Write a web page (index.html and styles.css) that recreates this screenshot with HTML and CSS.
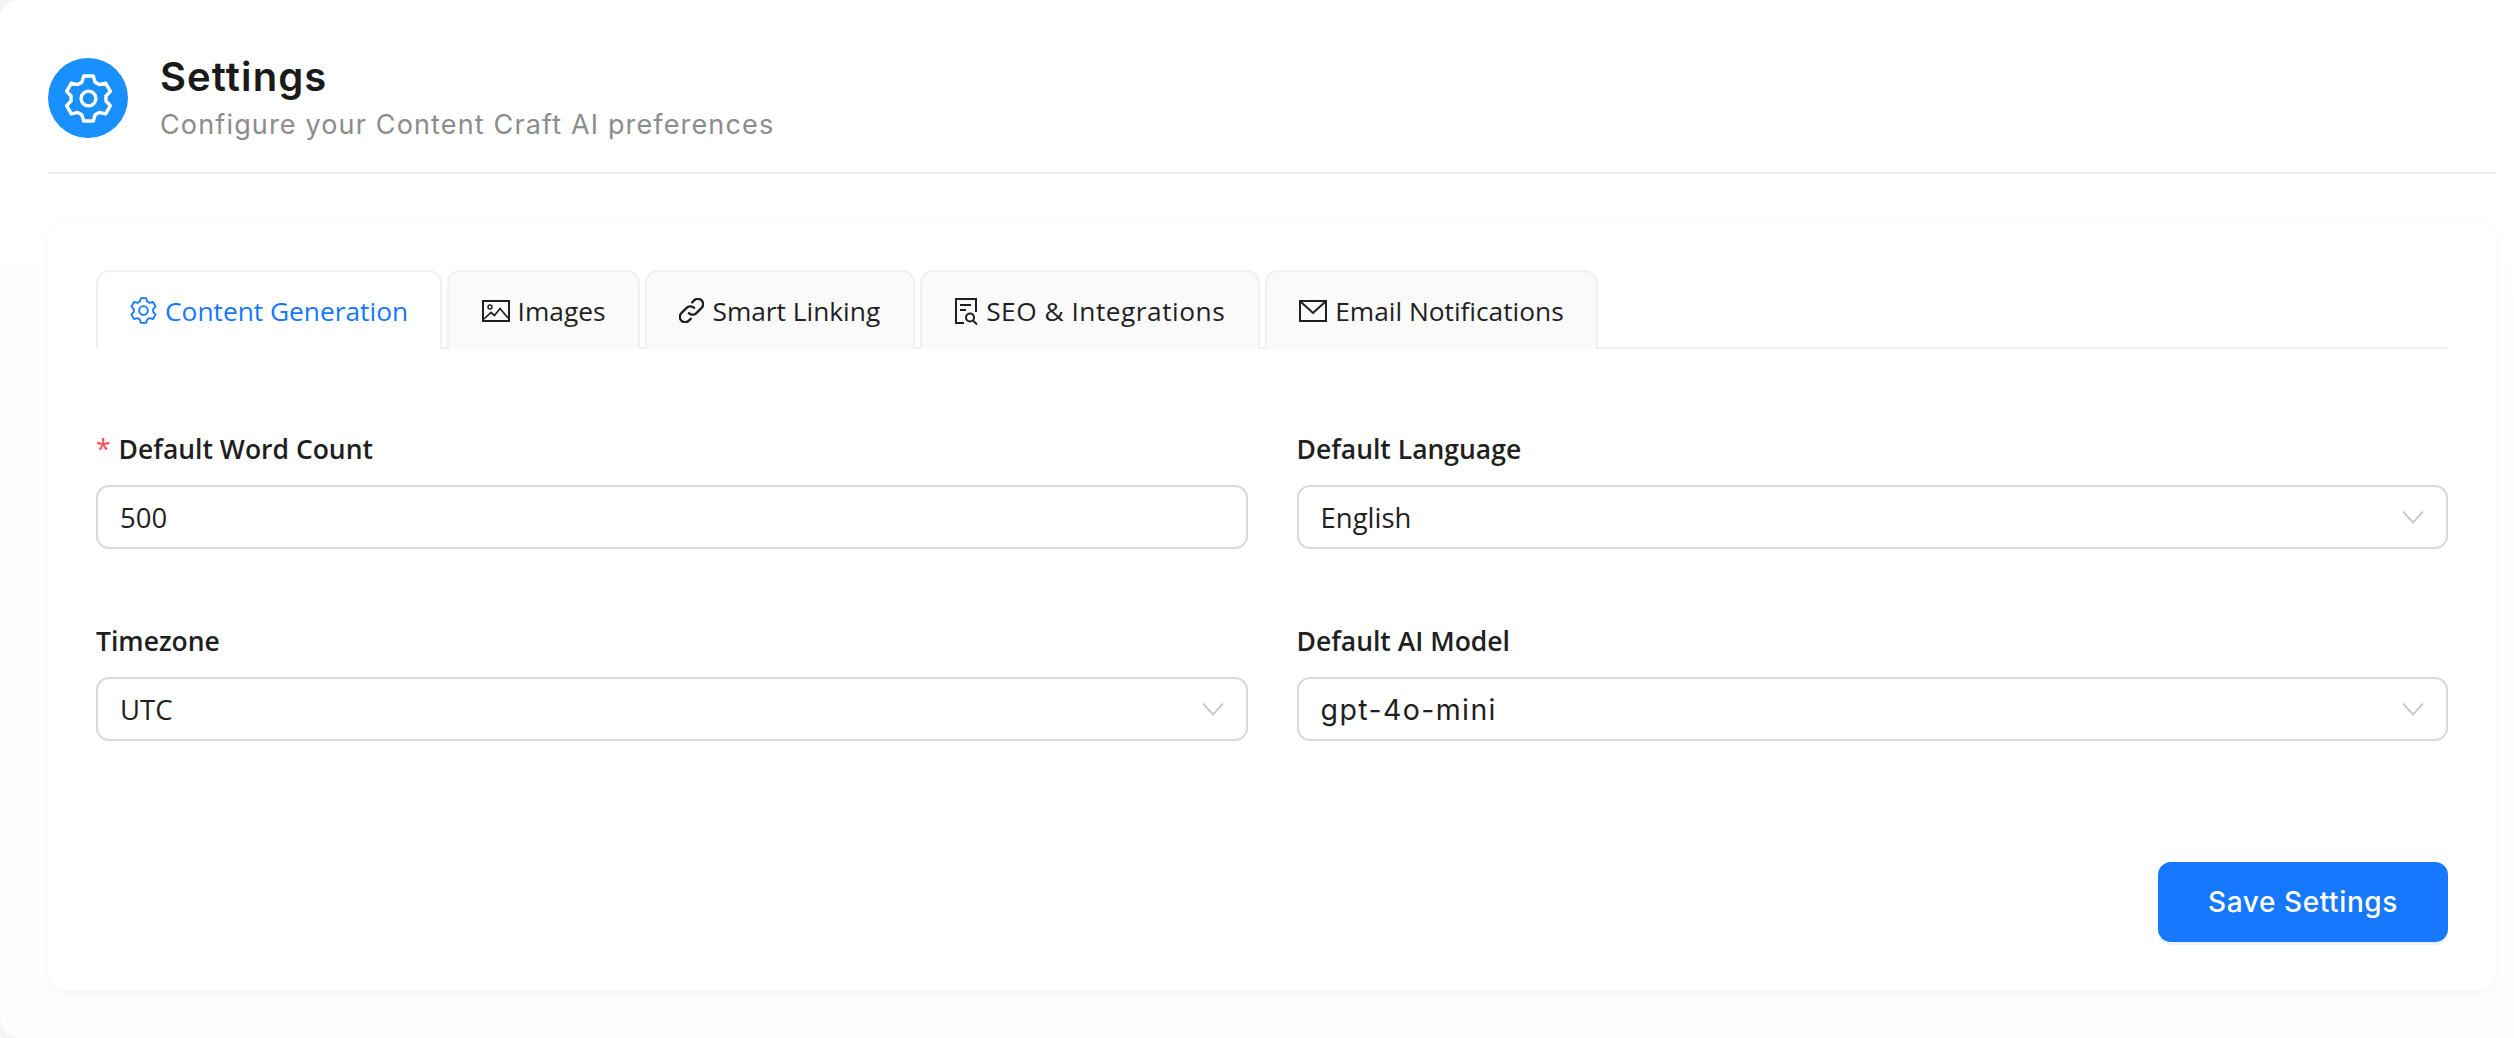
FILE: index.html
```html
<!DOCTYPE html>
<html lang="en">
<head>
<meta charset="utf-8">
<title>Settings</title>
<link rel="stylesheet" href="styles.css">
</head>
<body>
<main class="page">
  <header class="head">
    <span class="head-icon">
      <svg class="gear gear-lg" viewBox="-1 -1 50 50"><path d="M19.11 1.020H28.890L30.740 7.310 35.080 9.820 41.460 8.280 46.350 16.740 41.820 21.500V26.500L46.350 31.260 41.460 39.720 35.080 38.180 30.740 40.690 28.890 46.980H19.110L17.260 40.690 12.920 38.180 6.540 39.720 1.650 31.260 6.180 26.500V21.500L1.650 16.740 6.540 8.280 12.920 9.820 17.260 7.310Z"/><circle cx="24" cy="24" r="7.500"/></svg>
    </span>
    <div class="head-text">
      <h1 class="title">Settings</h1>
      <p class="subtitle">Configure your Content Craft AI preferences</p>
    </div>
  </header>

  <section class="card">
    <nav class="tabs">
      <div class="tab tab-active">
        <svg class="gear gear-sm" viewBox="-1 -1 50 50"><path d="M19.11 1.020H28.890L30.740 7.310 35.080 9.820 41.460 8.280 46.350 16.740 41.820 21.500V26.500L46.350 31.260 41.460 39.720 35.080 38.180 30.740 40.690 28.890 46.980H19.110L17.260 40.690 12.920 38.180 6.540 39.720 1.650 31.260 6.180 26.500V21.500L1.650 16.740 6.540 8.280 12.920 9.820 17.260 7.310Z"/><circle cx="24" cy="24" r="8"/></svg>
        <span>Content Generation</span>
      </div>
      <div class="tab">
        <svg class="ico" viewBox="0 0 28 24" width="28" height="24" fill="none" stroke="currentColor" stroke-width="2"><rect x="1" y="2" width="26" height="20"/><circle cx="8" cy="8" r="2" stroke-width="1.500"/><path d="M2 20l7-6.500 3.500 3L18 9.500l8 9.500" stroke-width="1.700"/></svg>
        <span>Images</span>
      </div>
      <div class="tab">
        <svg class="ico" viewBox="2.500 2.500 19 19" width="25" height="25" fill="none" stroke="currentColor" stroke-width="1.700" stroke-linecap="round"><path d="M10 14a4 4 0 0 0 5.700 0l4-4a4 4 0 0 0-5.700-5.700l-1.500 1.500"/><path d="M14 10a4 4 0 0 0-5.700 0l-4 4a4 4 0 0 0 5.700 5.700l1.500-1.500"/></svg>
        <span>Smart Linking</span>
      </div>
      <div class="tab tab-seo">
        <svg class="ico" viewBox="0 0 24 28" width="24" height="28" fill="none" stroke="currentColor" stroke-width="2"><path d="M10 26H2V2h20v13"/><path d="M6 8h11M6 13h6" stroke-width="1.800"/><circle cx="16" cy="20.500" r="4"/><path d="M19 23.500l4 4"/></svg>
        <span>SEO &amp; Integrations</span>
      </div>
      <div class="tab">
        <svg class="ico" viewBox="0 0 28 24" width="28" height="24" fill="none" stroke="currentColor" stroke-width="2"><rect x="1" y="2" width="26" height="20"/><path d="M2 3l12 11L26 3"/></svg>
        <span>Email Notifications</span>
      </div>
    </nav>

    <form class="form">
      <div class="field">
        <label class="label"><span class="req">*</span>Default Word Count</label>
        <div class="control">500</div>
      </div>
      <div class="field">
        <label class="label">Default Language</label>
        <div class="control">English<svg class="chev" viewBox="0 0 22 14" width="22" height="14"><path d="M1 1.500l10 11 10-11"/></svg></div>
      </div>
      <div class="field">
        <label class="label">Timezone</label>
        <div class="control">UTC<svg class="chev" viewBox="0 0 22 14" width="22" height="14"><path d="M1 1.500l10 11 10-11"/></svg></div>
      </div>
      <div class="field">
        <label class="label">Default AI Model</label>
        <div class="control control-model">gpt-4o-mini<svg class="chev" viewBox="0 0 22 14" width="22" height="14"><path d="M1 1.500l10 11 10-11"/></svg></div>
      </div>
    </form>

    <div class="actions">
      <button class="save" type="button">Save Settings</button>
    </div>
  </section>
</main>
</body>
</html>
```

FILE: styles.css
```css
* { box-sizing: border-box; }
html, body { margin: 0; height: 100%; background: #f5f5f5; }
body { font-family: "Open Sans", "Noto Sans", sans-serif; color: #1f1f1f; }
.page {
  height: 1038px;
  background: linear-gradient(#fff, #fdfdfe);
  border-radius: 20px 0 0 20px;
  padding: 58px 18px 0 48px;
}
.head {
  display: flex;
  align-items: flex-start;
  gap: 32px;
  padding-bottom: 23px;
  border-bottom: 2px solid #f0f0f0;
}
.head-icon {
  width: 80px;
  height: 80px;
  border-radius: 50%;
  background: #1890ff;
  display: flex;
  align-items: center;
  justify-content: center;
  flex: none;
}
.gear { flex: none; fill: none; stroke: currentColor; stroke-linejoin: round; }
.gear-lg { width: 49px; height: 49px; color: #fff; stroke-width: 3.5; }
.gear-sm { width: 27px; height: 27px; stroke-width: 3.4; }
.ico { flex: none; }
.title {
  margin: 0;
  font-family: Inter, sans-serif;
  font-weight: 600;
  font-size: 40px;
  letter-spacing: 1.1px;
  line-height: 38px;
  color: #1a1a1a;
}
.subtitle {
  margin: 5px 0 0;
  font-family: Inter, sans-serif;
  font-size: 27px;
  letter-spacing: 1.15px;
  line-height: 48px;
  color: #8c8c8c;
}
.card {
  margin-top: 47px;
  height: 769px;
  background: #fff;
  border-radius: 20px;
  box-shadow: 0 3px 10px rgba(0, 0, 0, .03);
  padding: 49px 48px 48px 48px;
  display: flex;
  flex-direction: column;
}
.tabs {
  display: flex;
  gap: 5px;
  height: 79px;
  border-bottom: 2px solid #f0f0f0;
}
.tab {
  display: flex;
  align-items: center;
  justify-content: center;
  gap: 8px;
  height: 79px;
  padding: 0 32.500px;
  font-size: 26.300px;
  color: #1f1f1f;
  background: #fafafa;
  border: 2px solid #f0f0f0;
  border-bottom: 0;
  border-radius: 13px 13px 0 0;
}
.tab-active { background: #fff; color: #1677ff; padding: 0 32px; }
.tab-seo { letter-spacing: .5px; }
.form {
  display: grid;
  grid-template-columns: 1fr 1fr;
  column-gap: 49px;
  row-gap: 75px;
  margin-top: 83px;
}
.field { display: flex; flex-direction: column; gap: 19px; }
.label {
  font-weight: 600;
  font-size: 26.500px;
  line-height: 34px;
  color: #1f1f1f;
}
.req { color: #ff4d4f; margin-right: 8px; font-weight: 400; }
.control {
  height: 64px;
  border: 2px solid #d9d9d9;
  border-radius: 13px;
  background: #fff;
  padding: 0 22px;
  font-size: 27.500px;
  display: flex;
  align-items: center;
  justify-content: space-between;
}
.control-model {
  font-family: Inter, sans-serif;
  font-size: 28.500px;
  letter-spacing: 1.400px;
}
.chev { fill: none; stroke: #bfbfbf; stroke-width: 1.700; flex: none; }
.actions {
  margin-top: auto;
  display: flex;
  justify-content: flex-end;
}
.save {
  width: 290px;
  height: 80px;
  border: 0;
  border-radius: 13px;
  background: #1677ff;
  color: #fff;
  font-family: Inter, sans-serif;
  font-weight: 500;
  font-size: 28px;
  letter-spacing: .6px;
  box-shadow: 0 3px 0 rgba(5, 145, 255, .1);
}
```
